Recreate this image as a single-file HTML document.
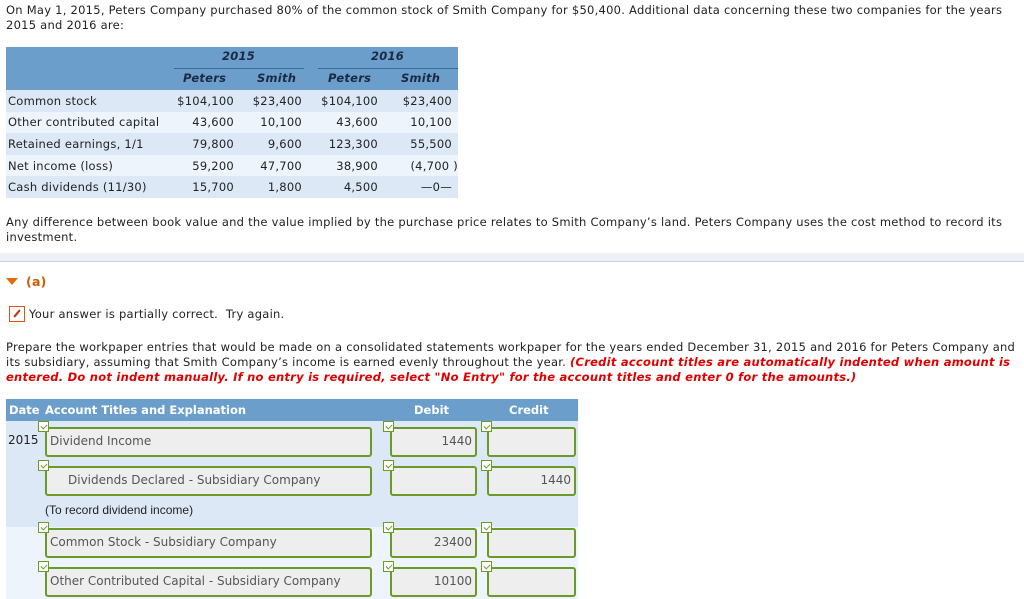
<!DOCTYPE html>
<html><head><style>
body{margin:0;width:1024px;height:599px;overflow:hidden;background:#fff;font-family:"DejaVu Sans",Verdana,sans-serif;font-size:11.5px;letter-spacing:0.25px;color:#222;position:relative}
.a{position:absolute;white-space:nowrap}
p{margin:0}
.t1{table-layout:fixed}
.t1 td{height:21.6px;padding:0 6px 0 2px;overflow:visible;white-space:nowrap}
.box{position:absolute;border:2px solid #6b9a28;border-radius:3px;background:#eeeeee;box-sizing:border-box;color:#555;font-size:12px;line-height:24px;letter-spacing:0}
.ck{position:absolute;width:11px;height:11px;border:1px solid #6b9a28;background:#fff;box-sizing:border-box}
.ck:after{content:"";position:absolute;left:3px;top:1px;width:3px;height:5px;border:solid #6b9a28;border-width:0 1.5px 1.5px 0;transform:rotate(45deg)}
.h{position:absolute;font-weight:bold;font-style:italic;color:#1a2a40}
</style></head><body>
<div class="a" style="left:6px;top:3px;width:1015px;white-space:normal;line-height:15px">On May 1, 2015, Peters Company purchased 80% of the common stock of Smith Company for $50,400. Additional data concerning these two companies for the years 2015 and 2016 are:</div>

<div class="a" style="left:6px;top:47px;width:452px;height:43px;background:#6b9ecb"></div>
<div class="a" style="left:174px;top:68px;width:130px;border-top:1px solid #3c6a98"></div>
<div class="a" style="left:318px;top:68px;width:140px;border-top:1px solid #3c6a98"></div>
<div class="h" style="left:222px;top:49px">2015</div>
<div class="h" style="left:371px;top:49px">2016</div>
<div class="h" style="left:183px;top:71px">Peters</div>
<div class="h" style="left:257px;top:71px">Smith</div>
<div class="h" style="left:328px;top:71px">Peters</div>
<div class="h" style="left:401px;top:71px">Smith</div>
<table class="t1 a" style="left:6px;top:90px;width:452px;border-collapse:collapse">
<colgroup><col style="width:164px"><col style="width:70px"><col style="width:68px"><col style="width:76px"><col style="width:74px"></colgroup>
<tr style="background:#dde8f6"><td>Common stock</td><td align=right>$104,100</td><td align=right>$23,400</td><td align=right>$104,100</td><td align=right>$23,400</td></tr>
<tr style="background:#eef4fc"><td>Other contributed capital</td><td align=right>43,600</td><td align=right>10,100</td><td align=right>43,600</td><td align=right>10,100</td></tr>
<tr style="background:#dde8f6"><td>Retained earnings, 1/1</td><td align=right>79,800</td><td align=right>9,600</td><td align=right>123,300</td><td align=right>55,500</td></tr>
<tr style="background:#eef4fc"><td>Net income (loss)</td><td align=right>59,200</td><td align=right>47,700</td><td align=right>38,900</td><td align=right style="padding-right:0">(4,700 )</td></tr>
<tr style="background:#dde8f6"><td>Cash dividends (11/30)</td><td align=right>15,700</td><td align=right>1,800</td><td align=right>4,500</td><td align=right>—0—</td></tr>
</table>

<div class="a" style="left:6px;top:215px;width:1015px;white-space:normal;line-height:15px">Any difference between book value and the value implied by the purchase price relates to Smith Company’s land. Peters Company uses the cost method to record its investment.</div>
<div class="a" style="left:0;top:253px;width:1024px;height:8px;background:#eef2f6;border-bottom:1px solid #c8d0d8"></div>

<div class="a" style="left:6px;top:278px;width:0;height:0;border-left:6px solid transparent;border-right:6px solid transparent;border-top:7px solid #e8690a"></div>
<div class="a" style="left:26px;top:274px;color:#d05a00;font-weight:bold;font-size:12.5px">(a)</div>
<div class="a" style="left:9px;top:306px;width:16px;height:16px;border:1px solid #e0501a;box-sizing:border-box"><div style="position:absolute;left:6px;top:2px;width:2px;height:9px;background:#c03010;transform:rotate(40deg)"></div></div>
<div class="a" style="left:29px;top:307px">Your answer is partially correct.&nbsp; Try again.</div>

<div class="a" style="left:6px;top:340px;width:1018px;white-space:normal;line-height:15px">Prepare the workpaper entries that would be made on a consolidated statements workpaper for the years ended December 31, 2015 and 2016 for Peters Company and its subsidiary, assuming that Smith Company’s income is earned evenly throughout the year. <b style="color:#e00000;font-style:italic">(Credit account titles are automatically indented when amount is entered. Do not indent manually. If no entry is required, select "No Entry" for the account titles and enter 0 for the amounts.)</b></div>

<div class="a" style="left:6px;top:399px;width:572px;height:22px;background:#6b9ecb;color:#fff;font-weight:bold;font-size:11.5px;line-height:22px;letter-spacing:0">
<span class="a" style="left:3px">Date</span><span class="a" style="left:39px">Account Titles and Explanation</span><span class="a" style="left:408px">Debit</span><span class="a" style="left:503px">Credit</span></div>
<div class="a" style="left:6px;top:421px;width:572px;height:106px;background:#dde8f6"></div>
<div class="a" style="left:6px;top:527px;width:572px;height:72px;background:#eef4fc"></div>
<div class="a" style="left:8px;top:433px;font-size:12px;letter-spacing:0">2015</div>

<div class="box" style="left:45px;top:427px;width:327px;height:30px;padding-left:3px">Dividend Income</div>
<div class="box" style="left:390px;top:427px;width:87px;height:30px;text-align:right;padding-right:3px">1440</div>
<div class="box" style="left:487px;top:427px;width:89px;height:30px"></div>
<div class="box" style="left:45px;top:466px;width:327px;height:30px;padding-left:21px">Dividends Declared - Subsidiary Company</div>
<div class="box" style="left:390px;top:466px;width:87px;height:30px"></div>
<div class="box" style="left:487px;top:466px;width:89px;height:30px;text-align:right;padding-right:3px">1440</div>
<div class="a" style="left:45px;top:503px;font-family:'Liberation Sans',Arial,sans-serif;font-size:12px;letter-spacing:0">(To record dividend income)</div>
<div class="box" style="left:45px;top:528px;width:327px;height:30px;padding-left:3px">Common Stock - Subsidiary Company</div>
<div class="box" style="left:390px;top:528px;width:87px;height:30px;text-align:right;padding-right:3px">23400</div>
<div class="box" style="left:487px;top:528px;width:89px;height:30px"></div>
<div class="box" style="left:45px;top:567px;width:327px;height:30px;padding-left:3px">Other Contributed Capital - Subsidiary Company</div>
<div class="box" style="left:390px;top:567px;width:87px;height:30px;text-align:right;padding-right:3px">10100</div>
<div class="box" style="left:487px;top:567px;width:89px;height:30px"></div>

<div class="ck" style="left:38px;top:421px"></div><div class="ck" style="left:383px;top:421px"></div><div class="ck" style="left:481px;top:421px"></div>
<div class="ck" style="left:38px;top:460px"></div><div class="ck" style="left:383px;top:460px"></div><div class="ck" style="left:481px;top:460px"></div>
<div class="ck" style="left:38px;top:522px"></div><div class="ck" style="left:383px;top:522px"></div><div class="ck" style="left:481px;top:522px"></div>
<div class="ck" style="left:38px;top:561px"></div><div class="ck" style="left:383px;top:561px"></div><div class="ck" style="left:481px;top:561px"></div>
</body></html>
